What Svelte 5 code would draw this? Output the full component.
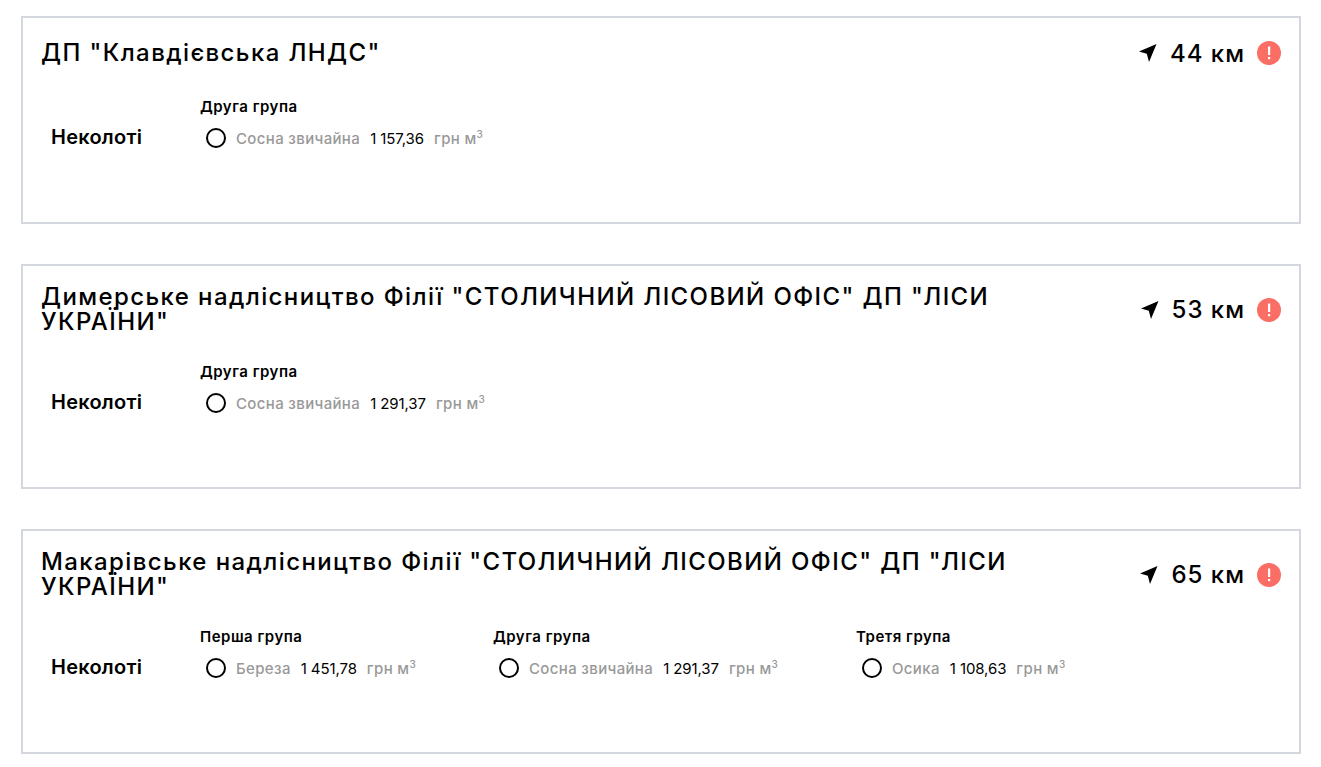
<script lang="ts">
  const cards = [
    {
      name: 'ДП "Клавдієвська ЛНДС"',
      distance: '44 км',
      offers: [{ group: 'Друга група', wood: 'Сосна звичайна', price: '1 157,36', width: 293 }]
    },
    {
      name: 'Димерське надлісництво Філії "СТОЛИЧНИЙ ЛІСОВИЙ ОФІС" ДП "ЛІСИ УКРАЇНИ"',
      distance: '53 км',
      offers: [{ group: 'Друга група', wood: 'Сосна звичайна', price: '1 291,37', width: 293 }]
    },
    {
      name: 'Макарівське надлісництво Філії "СТОЛИЧНИЙ ЛІСОВИЙ ОФІС" ДП "ЛІСИ УКРАЇНИ"',
      distance: '65 км',
      offers: [
        { group: 'Перша група', wood: 'Береза', price: '1 451,78', width: 293 },
        { group: 'Друга група', wood: 'Сосна звичайна', price: '1 291,37', width: 363 },
        { group: 'Третя група', wood: 'Осика', price: '1 108,63', width: 293 }
      ]
    }
  ];
</script>

<main class="list">
  {#each cards as card}
    <section class="card">
      <header class="head">
        <h2 class="name">{card.name}</h2>
        <div class="meta">
          <svg width="20" height="20" viewBox="0 0 20 20" aria-hidden="true">
            <path d="M18.5 1 L1 8.6 L8.8 10.8 L11 19 Z" fill="#000" />
          </svg>
          <span class="distance">{card.distance}</span>
          <svg width="24" height="24" viewBox="0 0 24 24" aria-hidden="true">
            <circle cx="12" cy="12" r="12" fill="#fb6e66" />
            <rect x="11" y="5.5" width="2.2" height="8.5" fill="#fff" />
            <rect x="11" y="16" width="2.2" height="2.2" fill="#fff" />
          </svg>
        </div>
      </header>
      <div class="body">
        <div class="kind">Неколоті</div>
        <div class="offers">
          {#each card.offers as offer}
            <div class="offer" style="width: {offer.width}px">
              <div class="group">{offer.group}</div>
              <div class="row">
                <span class="radio"></span>
                <span class="wood">{offer.wood}</span>
                <span class="price">{offer.price}</span>
                <span class="unit">грн м<sup>3</sup></span>
              </div>
            </div>
          {/each}
        </div>
      </div>
    </section>
  {/each}
</main>

<style>
  :global(body) {
    margin: 0;
    background: #fff;
    font-family: Inter, "Noto Sans", sans-serif;
    color: #000;
  }

  .list {
    display: flex;
    flex-direction: column;
    gap: 40px;
    padding: 16px 20px 0 21px;
  }

  .card {
    border: 2px solid #d4d7dd;
    padding: 19px 18px 72px;
  }

  .head {
    display: flex;
    justify-content: space-between;
    align-items: center;
    gap: 60px;
    min-height: 32px;
  }

  .name {
    margin: 0;
    font-size: 24px;
    font-weight: 450;
    line-height: 24.5px;
    letter-spacing: 1.4px;
  }

  .meta {
    display: flex;
    align-items: center;
    flex-shrink: 0;
  }

  .distance {
    font-size: 24px;
    font-weight: 500;
    margin: 0 12px;
    letter-spacing: 1px;
  }

  .body {
    display: flex;
    margin-top: 27px;
    padding-left: 10px;
  }

  .kind {
    width: 149px;
    font-size: 20px;
    font-weight: 600;
    margin-top: 29px;
    line-height: 24px;
    letter-spacing: 0.25px;
  }

  .offers {
    display: flex;
  }

  .group {
    margin-top: 1px;
    font-size: 15px;
    font-weight: 600;
    line-height: 20px;
    letter-spacing: 0.5px;
  }

  .row {
    display: flex;
    align-items: center;
    margin-top: 9px;
    padding-left: 6px;
    font-size: 15px;
    height: 24px;
  }

  .radio {
    width: 16px;
    height: 16px;
    border: 2px solid #000;
    border-radius: 50%;
    margin-right: 10px;
  }

  .wood, .unit {
    color: #999;
    font-weight: 500;
    letter-spacing: 0.35px;
  }

  .price {
    margin: 0 10px;
    letter-spacing: -0.1px;
  }

  sup {
    font-size: 10px;
    line-height: 0;
  }
</style>
